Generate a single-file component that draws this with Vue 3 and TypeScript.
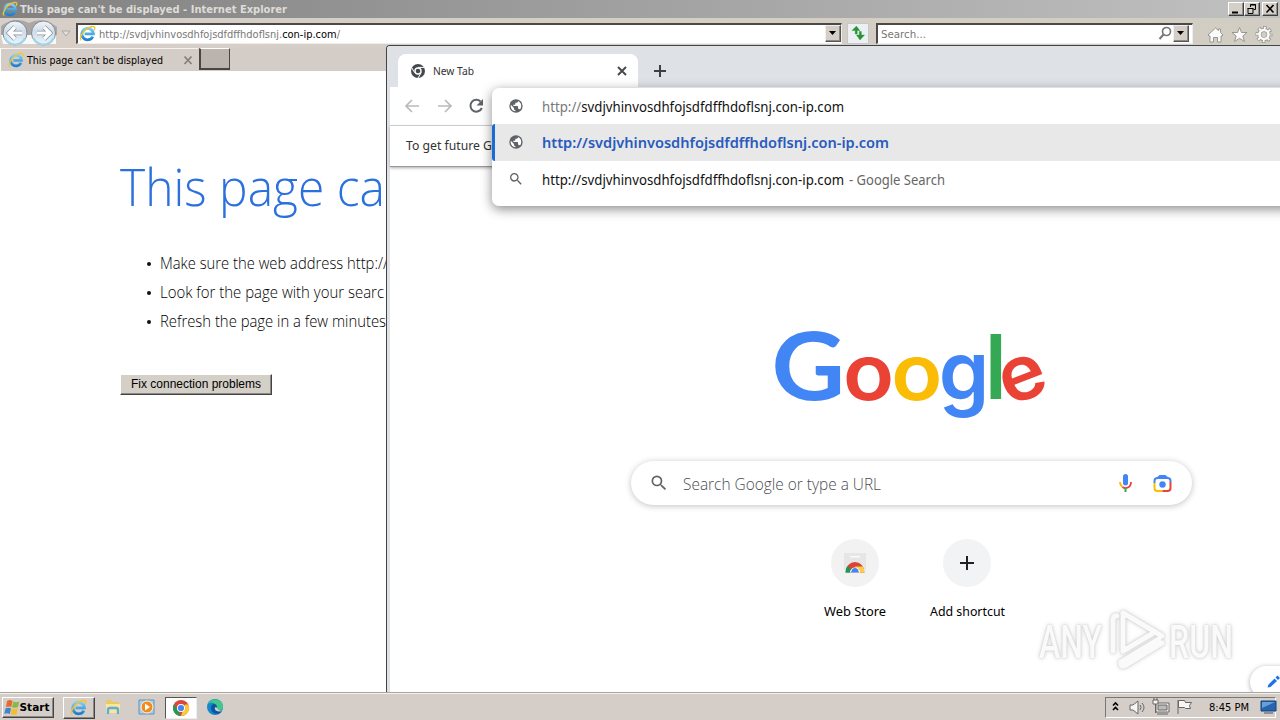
<script setup lang="ts">
interface Letter { ch: string; x: number; y: number; sx: number; sy?: number; size: number; fill: string; weight: number; font: string; rot?: number }

const host = 'svdjvhinvosdhfojsdfdffhdoflsnj.con-ip.com'
const tips = [
  { text: 'Make sure the web address http://', width: 228 },
  { text: 'Look for the page with your searc', width: 224 },
  { text: 'Refresh the page in a few minutes', width: 226 },
]
const letters: Letter[] = [
  { ch: 'G', x: 771.5, y: 399.5, sx: 1.09, size: 93, fill: '#4285f4', weight: 700, font: 'Lato' },
  { ch: 'o', x: 843, y: 399.5, sx: 1.09, size: 77, fill: '#ea4335', weight: 600, font: 'Inter' },
  { ch: 'o', x: 891.2, y: 399.5, sx: 1.09, size: 77, fill: '#fbbc05', weight: 600, font: 'Inter' },
  { ch: 'g', x: 938.8, y: 400, sx: 1.05, sy: 1.06, size: 77, fill: '#4285f4', weight: 600, font: 'Inter' },
  { ch: 'l', x: 985, y: 399, sx: 0.93, size: 89, fill: '#34a853', weight: 600, font: 'Inter' },
  { ch: 'e', x: 1008.5, y: 406.5, sx: 1.02, size: 77, fill: '#ea4335', weight: 600, font: 'Inter', rot: -21 },
]
</script>

<template>
  <div class="desktop">
    <svg class="defs" width="0" height="0">
      <defs>
        <linearGradient id="blueE" x1="0" y1="0" x2="0" y2="1"><stop offset="0" stop-color="#7fd0f7" /><stop offset="1" stop-color="#1b80cf" /></linearGradient>
        <linearGradient id="orb" x1="0" y1="0" x2="0" y2="1"><stop offset="0" stop-color="#f2f6fa" /><stop offset=".45" stop-color="#cfdbe6" /><stop offset="1" stop-color="#e9f8ff" /></linearGradient>
        <symbol id="ie" viewBox="0 0 18 18">
          <path d="M14.6 12.2A6.1 6.1 0 1 1 15.2 9.4H6" fill="none" stroke="url(#blueE)" stroke-width="3" />
          <path d="M2.2 16.2C-1 14 6 3 14 1.6c3.300-.5 3 2 2 3.800" fill="none" stroke="#f0c52c" stroke-width="1.500" />
        </symbol>
        <symbol id="globe" viewBox="0 0 24 24">
          <circle cx="12" cy="12" r="10" fill="#5f6368" />
          <path fill="#fff" d="M4.200 10.200 9 15v1c0 1.100.9 2 2 2v1.930C6 19.500 3.300 15 4.200 10.200zM17.900 17.390c-.260-.810-1-1.390-1.900-1.390h-1v-3c0-.550-.450-1-1-1H8v-2h2c.550 0 1-.450 1-1V7h2c1.100 0 2-.9 2-2v-.410c5 2 6.500 8.500 2.900 12.800z" />
        </symbol>
        <symbol id="glass" viewBox="0 0 24 24">
          <path fill="#5f6368" d="M15.500 14h-.790l-.280-.270A6.471 6.471 0 0 0 16 9.500 6.500 6.500 0 1 0 9.500 16c1.610 0 3.090-.590 4.230-1.570l.270.280v.790l5 4.990L20.490 19l-4.990-5zm-6 0C7.010 14 5 11.990 5 9.500S7.010 5 9.500 5 14 7.010 14 9.500 11.990 14 9.500 14z" />
        </symbol>
      </defs>
    </svg>

    <div class="ie">
      <header class="title">
        <svg width="20" height="18"><use href="#ie" x="2" y="1" width="16" height="16" /></svg>
        <svg class="tahoma" width="270" height="18"><text class="bold" x="0" y="13" textLength="267" lengthAdjust="spacingAndGlyphs" fill="#dedcd8">This page can't be displayed - Internet Explorer</text></svg>
        <div class="caps">
          <span class="cap"><svg width="14" height="12"><path d="M3 9.500h6" stroke="#000" stroke-width="2" /></svg></span>
          <span class="cap"><svg width="14" height="12"><path d="M5.500 4V1.500h5v5H8.500M5 2h6M3 5.500h5v5H3zM2.500 5.500h6" fill="none" stroke="#000" /></svg></span>
          <span class="cap last"><svg width="14" height="12"><path d="m3.500 2 7 7.500M10.500 2l-7 7.500" stroke="#000" stroke-width="1.600" /></svg></span>
        </div>
      </header>

      <div class="nav">
        <svg width="76" height="29" viewBox="0 0 76 29">
          <path d="M1 8Q15-2 29 5q14-7 28 4v8H1z" fill="#aaa7a4" /><path d="M1 17h55v9H3z" fill="#f7f8f8" />
          <circle cx="15" cy="15" r="12" fill="url(#orb)" stroke="#7d8a96" /><circle cx="43.500" cy="15" r="12" fill="url(#orb)" stroke="#7d8a96" />
          <path d="M5 20a11 11 0 0 0 20 0M33.500 20a11 11 0 0 0 20 0" fill="none" stroke="#a3d5ea" stroke-width="2" />
          <path d="M22 15H9m6-6-6 6 6 6" fill="none" stroke="#8493a3" stroke-width="4.600" /><path d="M22 15H9m6-6-6 6 6 6" fill="none" stroke="#fff" stroke-width="3.200" />
          <path d="M37 15h13m-6-6 6 6-6 6" fill="none" stroke="#8493a3" stroke-width="4.600" /><path d="M37 15h13m-6-6 6 6-6 6" fill="none" stroke="#fff" stroke-width="3.200" />
          <path d="M62 13h8l-4 5z" fill="#e4e0dc" stroke="#aaa6a2" />
        </svg>
        <div class="field address">
          <svg width="20" height="19"><use href="#ie" x="1" y="0" width="17" height="17" /></svg>
          <svg class="tahoma" width="245" height="19"><text x="1" y="13" textLength="241" lengthAdjust="spacingAndGlyphs" fill="#777">http://svdjvhinvosdhfojsdfdffhdoflsnj.<tspan fill="#000">con-ip.com</tspan>/</text></svg>
          <span class="drop"><svg width="13" height="14"><path d="M3 5h7L6.500 9z" fill="#000" /></svg></span>
        </div>
        <div class="refresh"><svg width="20" height="19"><path d="M8.500 2 4 6.500h3.200V10h2V6.500H12M12 16l4.500-5h-3.200V7.500h-2V11H8.500z" fill="#279335" stroke="#279335" stroke-width=".4" /></svg></div>
        <div class="field search">
          <svg class="tahoma" width="60" height="19"><text x="3" y="13" textLength="45" lengthAdjust="spacingAndGlyphs" fill="#777">Search...</text></svg>
          <svg class="mag" width="15" height="17"><circle cx="8.500" cy="6.500" r="4" fill="none" stroke="#777" stroke-width="1.700" /><path d="m5.500 9.500-4 4.500" stroke="#777" stroke-width="2" /></svg>
          <span class="drop"><svg width="13" height="14"><path d="M3 5h7L6.500 9z" fill="#000" /></svg></span>
        </div>
        <svg class="tools" width="74" height="29" viewBox="0 0 74 29">
          <g fill="#fbfbfb" stroke="#999591"><path d="m2 17 7.500-7 3 2.500V11h2v3.500L17 17l-1 1h-1v6h-3.500v-4.500h-4V24H4v-6H3z" /><path d="m33.500 9.500 2 5h5.500l-4.200 3.500 1.700 5.500-5-3.200-5 3.200 1.700-5.500L26 14.500h5.500z" /></g>
          <circle cx="58" cy="16.500" r="6.500" fill="none" stroke="#999591" stroke-width="4" stroke-dasharray="3.200 1.905" stroke-dashoffset="1.600" /><circle cx="58" cy="16.500" r="4.600" fill="none" stroke="#999591" stroke-width="4" /><circle cx="58" cy="16.500" r="6.500" fill="none" stroke="#fbfbfb" stroke-width="2.600" stroke-dasharray="1.800 3.305" stroke-dashoffset=".9" /><circle cx="58" cy="16.500" r="4.500" fill="none" stroke="#fbfbfb" stroke-width="2.600" />
        </svg>
      </div>

      <div class="tabs">
        <div class="ietab">
          <svg width="20" height="23"><use href="#ie" x="1" y="3" width="16" height="16" /></svg>
          <svg class="tahoma" width="155" height="23"><text x="0" y="15" textLength="136" lengthAdjust="spacingAndGlyphs" fill="#000">This page can't be displayed</text></svg>
          <svg width="16" height="23"><path d="m2.500 7.500 7 7.500m0-7.500-7 7.500" stroke="#85807b" stroke-width="1.800" /></svg>
        </div>
        <div class="newtab"></div>
      </div>

      <main class="page">
        <svg class="light" width="290" height="65"><text x="0" y="50" textLength="265" lengthAdjust="spacingAndGlyphs" font-size="51" fill="#2b70dd">This page ca</text></svg>
        <ul>
          <li v-for="tip in tips" :key="tip.text">
            <i></i><svg class="light" width="240" height="29"><text x="0" y="19.500" :textLength="tip.width" lengthAdjust="spacingAndGlyphs" font-size="15.500" fill="#000">{{ tip.text }}</text></svg>
          </li>
        </ul>
        <button><svg width="132" height="17"><text x="1" y="12" textLength="130" lengthAdjust="spacingAndGlyphs" font-size="12">Fix connection problems</text></svg></button>
      </main>
    </div>

    <section class="chrome">
      <div class="strip">
        <div class="ctab">
          <svg width="35" height="33"><circle cx="20" cy="17" r="7" fill="#45494d" /><circle cx="20" cy="17" r="3.700" fill="#fff" /><circle cx="20" cy="17" r="2.300" fill="#45494d" /><path d="M20 13.400h6.400M16.700 18.700 13.600 13.500M23.200 18.700 20 24" stroke="#fff" stroke-width="1" /></svg>
          <svg class="ui" width="170" height="33"><text x="0" y="21" textLength="41" lengthAdjust="spacingAndGlyphs" font-size="11" fill="#333">New Tab</text></svg>
          <svg width="30" height="33"><path d="m15 13 8 8m0-8-8 8" stroke="#45494d" stroke-width="1.900" /></svg>
        </div>
        <svg class="plus" width="30" height="33"><path d="M9 17h12M15 11v12" stroke="#3c4043" stroke-width="2" /></svg>
      </div>
      <div class="ctools">
        <svg width="102" height="38" viewBox="0 0 102 38">
          <path d="M29 19H16m6-6-6 6 6 6M48 19h13m-6-6 6 6-6 6" fill="none" stroke="#b8babd" stroke-width="1.700" />
          <path d="M90.500 14.500A5.900 5.900 0 1 0 91.800 21" fill="none" stroke="#5f6368" stroke-width="2" /><path d="M93 12v6.500h-6.500z" fill="#5f6368" />
        </svg>
      </div>
      <div class="info"><svg class="ui" width="92" height="40"><text x="0" y="23.500" textLength="86" lengthAdjust="spacingAndGlyphs" font-size="13" fill="#333">To get future G</text></svg></div>

      <div class="omnibox">
        <div class="row first">
          <svg width="50" height="36"><use href="#globe" x="16" y="10" width="16" height="16" /></svg>
          <svg class="ui" width="420" height="36"><text x="0" y="24" textLength="302" lengthAdjust="spacingAndGlyphs" font-size="14" fill="#111"><tspan fill="#777">http://</tspan>{{ host }}</text></svg>
        </div>
        <div class="row picked">
          <svg width="50" height="37"><use href="#globe" x="16" y="10" width="16" height="16" /></svg>
          <svg class="ui" width="420" height="37"><text x="0" y="24" textLength="347" lengthAdjust="spacingAndGlyphs" font-size="14" font-weight="600" fill="#285bbd">http://{{ host }}</text></svg>
        </div>
        <div class="row last">
          <svg width="50" height="37"><use href="#glass" x="16" y="10" width="16" height="16" /></svg>
          <svg class="ui" width="307" height="37"><text x="0" y="24" textLength="302" lengthAdjust="spacingAndGlyphs" font-size="14" fill="#111">http://{{ host }}</text></svg>
          <svg class="ui" width="100" height="37"><text x="0" y="24" textLength="96" lengthAdjust="spacingAndGlyphs" font-size="14" fill="#666">- Google Search</text></svg>
        </div>
      </div>

      <div class="ntp">
        <svg class="logo" width="290" height="105" viewBox="765 325 290 105">
          <text v-for="(l, i) in letters" :key="i" :transform="`translate(${l.x} ${l.y}) rotate(${l.rot ?? 0}) scale(${l.sx} ${l.sy ?? 1})`" :font-size="l.size" :font-weight="l.weight" :font-family="l.font + ', sans-serif'" :fill="l.fill">{{ l.ch }}</text>
        </svg>
        <div class="pill">
          <svg width="52" height="44"><use href="#glass" x="18" y="12" width="20" height="20" /></svg>
          <svg class="light grow" height="44"><text x="0" y="29" textLength="198" lengthAdjust="spacingAndGlyphs" font-size="15.500" fill="#4a4d51">Search Google or type a URL</text></svg>
          <svg width="80" height="44"><rect x="11" y="13" width="5" height="11.500" rx="2.500" fill="#4285f4" /><path d="M8 21q0 3.300 2.500 4.800" stroke="#fbbc04" stroke-width="1.800" fill="none" /><path d="M19 21c0 6.500-6.500 7-8.500 4.800" stroke="#ea4335" stroke-width="1.800" fill="none" /><path d="M13.500 27v4" stroke="#34a853" stroke-width="2" />
            <g fill="none" stroke-width="2"><path d="M42.500 22v-2q0-3 3-3h10q3 0 3 3v1" stroke="#4285f4" /><path d="M46 16.500 48 15h5l2 1.500" stroke="#4285f4" /><path d="M42.500 22v5q0 3 3 3h5" stroke="#fbbc04" /><path d="M58.500 21v6q0 3-3 3h-5" stroke="#ea4335" /></g><circle cx="50.500" cy="23.500" r="3.200" fill="#4285f4" />
          </svg>
        </div>
        <div class="shortcuts">
          <div class="shortcut">
            <div class="disc store"><svg width="24" height="24"><path d="M1 2h22v17H1z" fill="#e6e6e6" /><path d="M7 5h10v1.500H7z" fill="#fafafa" /><path d="M2.500 21.500a9.500 10.500 0 0 1 19 0z" fill="#da4437" /><path d="M2.500 21.500q0-4 2-6.500l6 6.500z" fill="#109d58" /><path d="M21.500 21.500q0-3.500-1.700-6H12l3 6z" fill="#ffcd40" /><path d="M7 21.500a5 5 0 0 1 10 0z" fill="#fff" /><path d="M8.200 21.500a3.800 4.500 0 0 1 7.600 0z" fill="#4285f4" /></svg></div>
            <svg class="ui" width="78" height="20"><text x="8" y="13" textLength="62" lengthAdjust="spacingAndGlyphs" font-size="12.500">Web Store</text></svg>
          </div>
          <div class="shortcut">
            <div class="disc"><svg width="24" height="24"><path d="M5 12h14M12 5v14" stroke="#202124" stroke-width="2" /></svg></div>
            <svg class="ui" width="78" height="20"><text x="2" y="13" textLength="75" lengthAdjust="spacingAndGlyphs" font-size="12.500">Add shortcut</text></svg>
          </div>
        </div>
      </div>
      <div class="edit"><svg width="30" height="28"><path d="m17.500 21.500 1-3 6-6 2.500 2.500-6.500 6zM25.500 11.500l2-2 2.500 2.500-2 2z" fill="#1a73e8" /></svg></div>
    </section>

    <svg class="watermark" width="210" height="74" viewBox="1030 604 210 74">
      <g font-family="Roboto, sans-serif" font-size="46" font-weight="500"><text x="1039" y="658" textLength="63" lengthAdjust="spacingAndGlyphs">ANY</text><text x="1169" y="658" textLength="64" lengthAdjust="spacingAndGlyphs">RUN</text></g>
      <path d="m1123 613 39 23M1123 613v38M1123 651l32-19M1113 651v-30q0-6 4-5M1162 643l-36 22q-6 3-5-3l38-23" />
    </svg>

    <footer class="taskbar">
      <div class="start">
        <svg width="17" height="20" viewBox="0 0 17 20"><path d="M4 3q3-2 5.500 0L8.300 9q-3-1-5.300.5z" fill="#e66a2d" /><path d="M10.300 3.500q3 1.500 6 0L15 9q-3 1.500-6 .3z" fill="#87b84a" /><path d="M2.500 10.500q3-1.500 5.500-.3L6.800 16q-3-1.500-5.500 0z" fill="#3c86cd" /><path d="M8.700 10.500q3 1.200 6-.2l-1 6q-3 1.500-6 0z" fill="#f4bd31" /></svg>
        <svg class="tahoma" width="32" height="20"><text class="bold" x="-.5" y="13" textLength="30" lengthAdjust="spacingAndGlyphs">Start</text></svg>
      </div>
      <div class="task raised"><svg width="20" height="20"><use href="#ie" x="1" y="1" width="17" height="17" /></svg></div>
      <div class="task"><svg width="20" height="20"><path d="M3 4q0-1 1-1h4l1 2h7v11H3z" fill="#e8c962" /><path d="M3 7h14v9H3z" fill="#f8e69d" /><path d="M5 17v-4q0-2 2-2h6q2 0 2 2v4" fill="none" stroke="#61add5" stroke-width="2.400" /></svg></div>
      <div class="task"><svg width="20" height="20"><path d="M2 3h15v14H2z" fill="#a9cdeb" stroke="#5d93bd" /><circle cx="10" cy="10" r="6" fill="#f28b1c" stroke="#fff3d8" /><path d="m8 6.500 5 3.500-5 3.500z" fill="#fff" /></svg></div>
      <div class="task pressed"><svg width="20" height="20"><circle cx="10" cy="10" r="8" fill="#de4639" /><path d="M3.100 6 10 18a8 8 0 0 1-6.900-12z" fill="#219b57" /><path d="M10 18 14 6.500h3.300A8 8 0 0 1 10 18z" fill="#fbc934" /><circle cx="10" cy="10" r="4" fill="#fff" /><circle cx="10" cy="10" r="3.100" fill="#4285f4" /></svg></div>
      <div class="task"><svg width="20" height="20"><circle cx="10" cy="10" r="8" fill="#1687c8" /><path d="M3 7c4-8 16-4 15 3 0 4-5 4-7 2 2-5-4-8-8-5z" fill="#43c88b" /><path d="M6 11c0-5 5-5 6-2-2 4 1 6 5 5-3 5-11 3-11-3z" fill="#0d55a1" /><path d="M10 10q-1 4 4 4.500 3 0 3.500-1-4 1-5.500-2.500z" fill="#d5d0cb" /></svg></div>
      <div class="tray">
        <svg width="95" height="20" viewBox="-1 1 95 20"><path d="m6 8.500 2.500-2.500L11 8.500M6 13l2.500-2.500L11 13" fill="none" stroke="#000" stroke-width="1.600" />
          <g fill="#f6f5f3" stroke="#666"><path d="M23 8h3l5-4v13l-5-4h-3z" /><path d="M33 8q2 2.500 0 5M35 6q4 4.500 0 9" fill="none" /><path d="M49 6h13v9H49z" /><path d="M51 8h9v5h-9z" fill="#bbb" /><path d="M50 17h11M46 3h5v4h-5zM48.500 7v9M47 1v2M50 1v2" /><path d="M71 3v14M71.500 3.500h6l1 2h6l-2 3 1 3h-5l-1-1h-6z" /></g>
        </svg>
        <svg class="tahoma" width="54" height="20"><text x="8" y="13" textLength="40" lengthAdjust="spacingAndGlyphs">8:45 PM</text></svg>
        <svg width="17" height="20"><path d="M1 3h15v10H1z" fill="#2764b0" stroke="#174378" /><path d="M2 4h13L2 10z" fill="#659fdc" /><path d="M4 15h9" stroke="#456" /></svg>
      </div>
    </footer>
  </div>
</template>

<style>
html, body { margin: 0; overflow: hidden; }
</style>
<style scoped>
* { box-sizing: border-box; }
svg { display: block; flex: none; overflow: visible; }
.desktop { position: relative; width: 1280px; height: 720px; overflow: hidden; display: flex; flex-direction: column; background: #fff; font-family: "Liberation Sans", Arial, sans-serif; }
.defs { position: absolute; }
.tahoma text { font-family: "DejaVu Sans Condensed", "DejaVu Sans", sans-serif; font-stretch: condensed; font-size: 11px; }
.tahoma .bold { font-weight: 700; }
.ui text { font-family: "Noto Sans", "Open Sans", sans-serif; }
.light text { font-family: "Open Sans", "Noto Sans", sans-serif; font-weight: 300; }
.ie { height: 692px; display: flex; flex-direction: column; }
.title { height: 18px; display: flex; background: linear-gradient(90deg, #818181, #c1c1c1); }
.caps { margin-left: auto; padding: 2px 2px 0 0; display: flex; }
.cap { width: 16px; height: 14px; background: #d4d0c8; border: 1px solid; border-color: #fff #404040 #404040 #fff; box-shadow: inset -1px -1px #909090; }
.cap.last { margin-left: 2px; }
.nav { height: 30px; display: flex; background: linear-gradient(90deg, #d7cfc8, #d2cdc2); }
.field { height: 21px; margin-top: 5px; background: #fff; border: 1px solid #777; border-top: 2px solid #4c4948; border-left: 2px solid #4c4948; border-right-color: #eee; border-bottom-color: #eee; display: flex; }
.address { width: 766px; }
.drop { margin-left: auto; width: 16px; height: 17px; background: #d4cec7; border: 1px solid; border-color: #eee #555 #555 #eee; box-shadow: inset -1px -1px #8d8985; }
.refresh { width: 22px; height: 21px; margin: 5px 7px 0 5px; border: 1px solid #c2c8cf; background: #edf0f3; }
.search { width: 317px; padding-right: 3px; }
.mag { margin-left: auto; }
.search .drop { margin-left: 0; }
.tools { margin-left: 13px; }
.tabs { height: 23px; display: flex; background: #d4cdc7; }
.ietab { display: flex; width: 198px; padding-left: 6px; border-top: 1px solid #f6f4f2; border-left: 1px solid #fff; }
.newtab { width: 31px; height: 22px; margin-left: 1px; background: #bbb3ae; border: 2px solid #4a4543; border-top: 1px solid #fff; border-right-width: 1px; }
.page { flex: 1; padding: 85px 0 0 120px; background: #fff; }
ul { list-style: none; margin: 28px 0 0; padding: 0; }
li { height: 29px; display: flex; align-items: center; }
li i { width: 4px; height: 4px; margin: 0 9px 0 27px; border-radius: 50%; background: #111; }
button { display: block; margin: 38px 0 0; padding: 1px 9px; width: 152px; height: 21px; background: #d4d0c8; border: 1px solid; border-color: #fff #444 #444 #fff; box-shadow: inset -1px -1px #888; }
.chrome { position: absolute; left: 386px; top: 45px; width: 894px; height: 647px; background: #fff; border-left: 1px solid #444; border-top: 1px solid #444; border-top-left-radius: 4px; overflow: hidden; box-shadow: inset 3px 0 #dee1e6; display: flex; flex-direction: column; }
.strip { height: 41px; background: #dee1e6; padding: 8px 0 0 11px; display: flex; }
.ctab { width: 240px; height: 33px; border-radius: 8px 8px 0 0; background: #fff; display: flex; }
.plus { margin-left: 7px; }
.ctools { height: 39px; margin-left: 3px; border-bottom: 1px solid #d2d2d2; }
.info { height: 41px; margin-left: 3px; padding-left: 16px; border-bottom: 1px solid #999; box-shadow: 0 1px 3px #aaa; }
.omnibox { position: absolute; left: 105px; top: 42px; width: 850px; height: 118px; border-radius: 7px; background: #fff; box-shadow: 0 3px 12px #0007; overflow: visible; }
.row { display: flex; }
.picked { background: #e8e8e8; border-left: 3px solid #1b6bd5; border-radius: 3px 0 0 3px; }
.picked > svg:first-child { margin-left: -3px; }
.ntp { flex: 1; display: flex; flex-direction: column; width: 562px; margin-left: 244px; }
.logo { margin: 158px 0 0 134px; }
.pill { flex: none; width: 561px; height: 44px; margin-top: 31px; border-radius: 22px; background: #fff; box-shadow: 0 1px 6px #20212447; display: flex; }
.grow { flex: 1; }
.shortcuts { display: flex; gap: 34px; margin: 34px 0 0 185px; }
.shortcut { width: 78px; display: flex; flex-direction: column; align-items: center; gap: 16px; }
.disc { width: 48px; height: 48px; border-radius: 50%; background: #f1f3f4; display: flex; align-items: center; justify-content: center; }
.store { background: #f2f2f2; }
.edit { position: absolute; left: 863px; top: 620px; width: 60px; height: 32px; border-radius: 16px; background: #fff; box-shadow: 0 1px 5px #0005; }
.watermark { position: absolute; left: 1030px; top: 604px; fill: #fafafa; filter: drop-shadow(0 0 1px #ccc) drop-shadow(0 0 2px #ddd); }
.watermark path { fill: none; stroke: #fafafa; stroke-width: 5; stroke-linejoin: round; stroke-linecap: round; }
.taskbar { height: 28px; padding: 4px 4px 2px 2px; display: flex; background: #d5cdc7; border-top: 1px solid #aaa59f; box-shadow: inset 0 1px #f3f0ed; }
.start, .raised { border: 1px solid; border-color: #fff #444 #444 #fff; box-shadow: inset -1px -1px #8d8985; }
.start { width: 52px; display: flex; }
.task { width: 32px; height: 22px; margin-left: 2px; padding: 0 0 0 6px; }
.start + .task { margin-left: 9px; }
.task.raised { padding-left: 5px; }
.pressed { background: #fff; border: 1px solid; border-color: #555 #eee #eee #555; padding: 0 0 0 5px; }
.tray { margin-left: auto; width: 171px; border: 1px solid; border-color: #777 #fff #fff #777; display: flex; }
.tray > svg:last-child { margin-left: 5px; }
</style>
